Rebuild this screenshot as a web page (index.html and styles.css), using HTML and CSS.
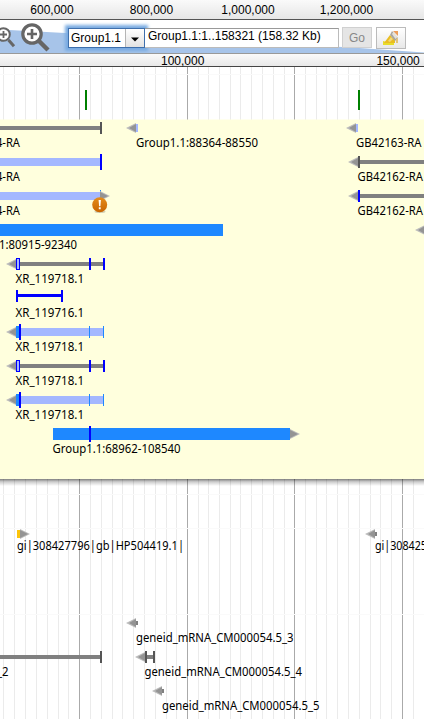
FILE: index.html
```html
<!DOCTYPE html>
<html lang="en">
<head>
<meta charset="utf-8">
<title>Genome browser</title>
<link rel="stylesheet" href="styles.css">
</head>
<body>
<div class="browser">
  <div class="overview">
    <span>600,000</span><span>800,000</span><span>1,000,000</span><span>1,200,000</span>
  </div>
  <div class="nav">
    <svg class="trapezoid" width="424" height="33" viewBox="0 0 424 33"><path d="M0 9.5L65 13L352 27.5L424 32.5V33H0Z"/></svg>
    <svg class="zoom-icons" width="50" height="33" viewBox="0 0 50 33">
      <g class="lens">
        <circle cx="3.5" cy="14.5" r="6.3" stroke-width="2"/><path d="M8.5 20L14 26.300" stroke-width="3"/><path d="M0 14.500H7M3.500 11V18" stroke-width="1.800"/>
        <circle cx="32" cy="14" r="9.200" stroke-width="3.200"/><path d="M39 21L48 30" stroke-width="4.400"/><path d="M27 14H37M32 9V19" stroke-width="2.600"/>
      </g>
    </svg>
    <div class="combo"><span class="combo-text">Group1.1</span><span class="combo-arrow"><svg width="8" height="5" viewBox="0 0 8 5"><path d="M0 0.500H8L4 4.500Z"/></svg></span></div>
    <div class="location"><span>Group1.1:1..158321 (158.32 Kb)</span></div>
    <div class="button go">Go</div>
    <div class="button highlight">
      <svg width="18" height="16" viewBox="0 0 18 16">
        <path fill="#e8dc2a" d="M1 11L5 12L12 11V15H1Z"/>
        <path fill="#e9bd22" d="M2 13L8 5L13 10V13Z"/>
        <path fill="#f4d778" d="M6 11L9 7L11 9L8 12Z"/>
        <path fill="#aaa69f" d="M8 5L10 1L16 8L13 11Z"/>
        <path fill="#e4e1da" d="M10 4L11.500 2L15.500 7L13.500 9Z"/>
        <path fill="#ed9c5a" d="M11 1L16 1V6Z"/>
        <path fill="#e2c37d" d="M14 9L16 8V13H14Z"/>
      </svg>
    </div>
  </div>
  <div class="ruler"><span>100,000</span><span>150,000</span></div>
  <svg class="tracks" width="424" height="652" viewBox="0 67 424 652">
    <defs>
      <linearGradient id="shade" x1="0" y1="0" x2="0" y2="1"><stop offset="0" stop-color="#000" stop-opacity=".5"/><stop offset=".4" stop-color="#000" stop-opacity=".2"/><stop offset="1" stop-color="#000" stop-opacity="0"/></linearGradient>
      <linearGradient id="amber" x1="0" y1="0" x2="0" y2="1"><stop offset="0" stop-color="#e58d1c"/><stop offset="1" stop-color="#c96500"/></linearGradient>
      <g id="left"><path fill="#bcbcbc" d="M0 0L10-5V5Z"/><path fill="#949494" d="M3 0L10-4V4Z"/></g>
      <g id="right"><path fill="#bcbcbc" d="M10 0L0-5V5Z"/><path fill="#949494" d="M8 0L0-4V4Z"/></g>
      <g id="transcript">
        <use href="#left" x="6" y="0"/>
        <path class="grey" d="M20-2H104V2H20Z"/>
        <path class="blue" d="M16-6H20V6H16ZM89-6H91V6H89ZM103-6H105V6H103Z"/>
        <path class="pale" d="M17-5H19V5H17Z"/>
      </g>
      <g id="match">
        <use href="#left" x="6" y="0"/>
        <path class="pale" d="M20-4H104V4H20Z"/>
        <path class="dodger" d="M16-6H20V6H16ZM89-6H90V6H89ZM103-6H104V6H103Z"/>
        <path class="blue" d="M19-8H21V8H19Z"/>
      </g>
    </defs>
    <path class="minor" d="M3.500 67V719M14.500 67V719M25.500 67V719M36.500 67V719M47.500 67V719M58.500 67V719M68.500 67V719M90.500 67V719M101.500 67V719M112.500 67V719M122.500 67V719M133.500 67V719M144.500 67V719M155.500 67V719M166.500 67V719M176.500 67V719M198.500 67V719M208.500 67V719M219.500 67V719M230.500 67V719M240.500 67V719M251.500 67V719M262.500 67V719M273.500 67V719M284.500 67V719M305.500 67V719M316.500 67V719M326.500 67V719M337.500 67V719M348.500 67V719M359.500 67V719M370.500 67V719M380.500 67V719M391.500 67V719M413.500 67V719"/>
    <path class="major" d="M79.500 67V719M187.500 67V719M294.500 67V719M402.500 67V719"/>
    <path class="divider" d="M0 74.500H424M0 494.500H424M0 528.500H424M0 614.500H424"/>
    <path class="green" d="M85 90H87V110H85ZM358 90H360V110H358Z"/>

    <rect class="annotations" y="119.500" width="424" height="359.500"/>
    <rect y="479" width="424" height="7" fill="url(#shade)"/>

    <path class="grey" d="M0 126H101V130H0ZM360 160H424V164H360ZM360 194H424V198H360Z"/>
    <path class="dark" d="M100 122H102V134H100ZM358 156H360V168H358Z"/>
    <path class="pale" d="M136 124H138V132H136ZM356 124H358V132H356ZM0 158H101V166H0ZM0 192H101V200H0Z"/>
    <path class="blue" d="M100 154H102V170H100ZM358 190H360V202H358Z"/>
    <path class="dodger" d="M100 190H101V202H100ZM0 224H223V236H0Z"/>
    <use href="#left" x="126" y="128"/><use href="#left" x="346" y="128"/>
    <use href="#left" x="348" y="162"/><use href="#left" x="348" y="196"/><use href="#left" x="415" y="230"/>
    <use href="#right" x="100" y="196"/>
    <ellipse cx="100" cy="211.500" rx="5.500" ry="1.500" fill="#d3d2b5"/>
    <circle cx="99.700" cy="204.700" r="7.500" fill="url(#amber)"/>
    <path fill="#fff" d="M98.600 200H100.900L100.400 206.300H99.100ZM98.800 207.300H100.700V209.200H98.800Z"/>

    <use href="#transcript" y="264"/>
    <path class="blue" d="M16 290H18V294H61V290H63V302H61V297H18V302H16Z"/>
    <use href="#match" y="332"/>
    <use href="#transcript" y="366"/>
    <use href="#match" y="400"/>
    <path class="dodger" d="M53 428H290V440H53Z"/><path class="blue" d="M89 426H91V442H89Z"/>
    <use href="#right" x="290" y="434"/>

    <path fill="#fcc40a" d="M17 530H20V538H17Z"/>
    <use href="#right" x="20" y="534"/><use href="#left" x="365" y="534"/>
    <path class="grey" d="M375 532H377V536H375ZM136 621H138V625H136ZM162 689H164V693H162ZM0 655H101V659H0ZM147 655H153V659H147Z"/>
    <use href="#left" x="126" y="623"/><use href="#left" x="135" y="657"/><use href="#left" x="152" y="691"/>
    <path class="dark" d="M100 651H102V663H100ZM145 651H147V663H145ZM153 651H155V663H153Z"/>

    <g class="labels">
      <text x="-45" y="147" textLength="65" lengthAdjust="spacingAndGlyphs">GB42164-RA</text>
      <text x="-45" y="181" textLength="65" lengthAdjust="spacingAndGlyphs">GB42164-RA</text>
      <text x="-45" y="215" textLength="65" lengthAdjust="spacingAndGlyphs">GB42164-RA</text>
      <text x="-44" y="249" textLength="121" lengthAdjust="spacingAndGlyphs">Group1.1:80915-92340</text>
      <text x="136" y="147" textLength="122" lengthAdjust="spacingAndGlyphs">Group1.1:88364-88550</text>
      <text x="356" y="147" textLength="65.500" lengthAdjust="spacingAndGlyphs">GB42163-RA</text>
      <text x="357.500" y="181" textLength="65.500" lengthAdjust="spacingAndGlyphs">GB42162-RA</text>
      <text x="357.500" y="215" textLength="65.500" lengthAdjust="spacingAndGlyphs">GB42162-RA</text>
      <text x="15.500" y="283" textLength="68.500" lengthAdjust="spacingAndGlyphs">XR_119718.1</text>
      <text x="15.500" y="317" textLength="68.500" lengthAdjust="spacingAndGlyphs">XR_119716.1</text>
      <text x="15.500" y="351" textLength="68.500" lengthAdjust="spacingAndGlyphs">XR_119718.1</text>
      <text x="15.500" y="385" textLength="68.500" lengthAdjust="spacingAndGlyphs">XR_119718.1</text>
      <text x="15.500" y="419" textLength="68.500" lengthAdjust="spacingAndGlyphs">XR_119718.1</text>
      <text x="52.500" y="453" textLength="128" lengthAdjust="spacingAndGlyphs">Group1.1:68962-108540</text>
      <text x="17" y="550" textLength="167" lengthAdjust="spacingAndGlyphs">gi|308427796|gb|HP504419.1|</text>
      <text x="375" y="550" textLength="52" lengthAdjust="spacingAndGlyphs">gi|308425</text>
      <text x="136" y="642" textLength="157.500" lengthAdjust="spacingAndGlyphs">geneid_mRNA_CM000054.5_3</text>
      <text x="144.500" y="676" textLength="157.500" lengthAdjust="spacingAndGlyphs">geneid_mRNA_CM000054.5_4</text>
      <text x="162" y="710" textLength="157.500" lengthAdjust="spacingAndGlyphs">geneid_mRNA_CM000054.5_5</text>
      <text x="-149" y="676" textLength="157.500" lengthAdjust="spacingAndGlyphs">geneid_mRNA_CM000054.5_2</text>
    </g>
  </svg>
</div>
</body>
</html>
```
FILE: styles.css
```css
* { box-sizing: border-box; }
body { margin: 0; background: #fff; font-family: "Liberation Sans", Arial, sans-serif; color: #000; }
.browser { width: 424px; height: 719px; overflow: hidden; }
.overview {
  height: 20px;
  display: grid;
  grid-template-columns: 104px 95px 98px 99px;
  justify-items: center;
  border-bottom: 1px solid #555;
  background: linear-gradient(#fafafa, #e6e6e6);
  font-size: 12px;
  line-height: 20px;
}
.nav {
  position: relative;
  height: 34px;
  display: flex;
  align-items: flex-start;
  border-bottom: 1px solid #999;
}
.trapezoid { position: absolute; left: 0; top: 0; fill: #a7c4e9; }
.zoom-icons { position: relative; flex: none; margin-right: 18px; }
.lens { fill: none; stroke: #666; }
.lens circle { fill: #fff; }
.combo {
  position: relative;
  z-index: 1;
  flex: none;
  display: flex;
  width: 77px;
  height: 20px;
  margin-top: 8px;
  border: 1px solid #3e6fac;
  background: #fff;
  box-shadow: 0 0 3px 3px #78abe1;
  font-size: 12px;
  line-height: 18px;
}
.combo-text { width: 56px; padding-left: 2px; white-space: nowrap; }
.combo-arrow {
  flex: 1;
  display: flex;
  align-items: center;
  justify-content: center;
  padding-top: 2px;
  border-left: 1px solid #b5b5b5;
  background: linear-gradient(#fff, #e2e2e2);
}
.location {
  position: relative;
  z-index: 2;
  flex: none;
  width: 194px;
  height: 20px;
  margin-top: 8px;
  padding-left: 3px;
  border: 1px solid #bbb;
  border-top-color: #999;
  border-left: 0;
  background: #fff;
  font-size: 12px;
  line-height: 15px;
  white-space: nowrap;
}
.button {
  position: relative;
  display: flex;
  flex: none;
  align-items: center;
  justify-content: center;
  width: 30px;
  height: 21px;
  margin: 7px 0 0 3px;
  border: 1px solid #d0d0d0;
  background: #e5e5e5;
}
.go { color: #888; font-size: 12px; }
.highlight { height: 22px; margin-left: 4px; border-color: #bbb; background: linear-gradient(#fff, #e8e8e8); }
.ruler {
  height: 13px;
  display: flex;
  gap: 172px;
  padding-left: 161px;
  border-bottom: 1px solid #444;
  background: linear-gradient(#fafafa, #e8e8e8);
  font-size: 12px;
  line-height: 14px;
}
.tracks { display: block; }
.minor { stroke: #ebebeb; }
.major { stroke: #aaa; }
.divider { stroke: #fafafa; }
.green { fill: #008000; }
.annotations { fill: #ffffdd; }
.grey { fill: #808080; }
.dark { fill: #555; }
.pale { fill: #a4b8ff; }
.blue { fill: #0000ff; }
.dodger { fill: #1e88ff; }
.labels { font: 12px "Noto Sans", "Open Sans", sans-serif; }
```
